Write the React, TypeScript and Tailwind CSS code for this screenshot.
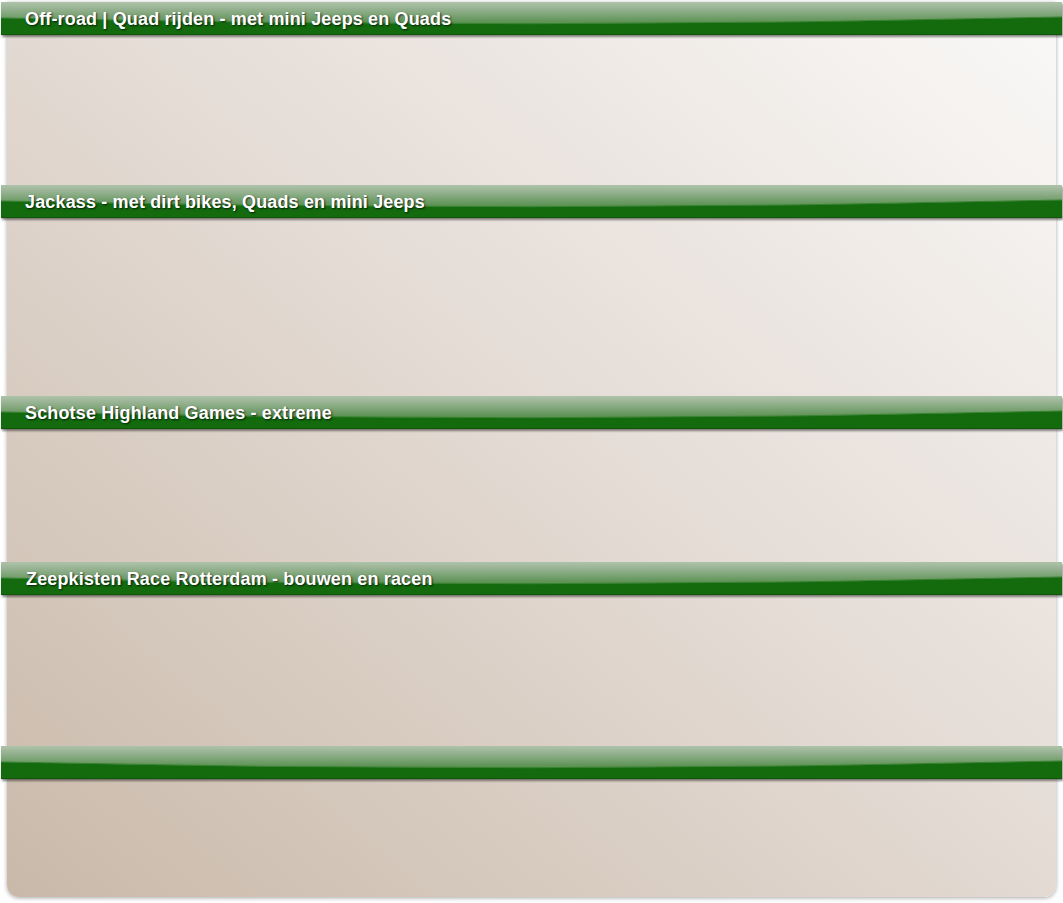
import React from "react";

function Bar({ title, indent = 24 }: { title?: string; indent?: number }) {
  return (
    <div className="relative mx-[-6px] h-[33px] bg-[#136b0e] shadow-[1px_2px_2px_rgba(0,0,0,0.45)]">
      <svg
        className="absolute inset-0 h-full w-full"
        viewBox="0 0 1000 33"
        preserveAspectRatio="none"
      >
        <defs>
          <linearGradient id="gl" x1="0" y1="0" x2="0" y2="1">
            <stop offset="0" stopColor="#aec3aa" />
            <stop offset="0.35" stopColor="#93b08e" />
            <stop offset="1" stopColor="#568f4e" />
          </linearGradient>
        </defs>
        <path d="M0,0 H1000 V15 Q500,28 0,16 Z" fill="url(#gl)" />
        <path d="M0,16 Q500,28 1000,15" fill="none" stroke="#3a8232" strokeWidth="1" vectorEffect="non-scaling-stroke" />
        <rect x="0" y="32" width="1000" height="1" fill="#0f560b" />
      </svg>
      {title && (
        <div
          className={`relative pt-[7px] text-[18px] font-bold leading-[21px] tracking-[0.15px] text-white [text-shadow:1px_1px_2px_rgba(0,0,0,0.75)] ${indent === 25 ? "pl-[25px]" : "pl-[24px]"}`}
          style={{ fontFamily: '"Liberation Sans", Arial, sans-serif' }}
        >
          {title}
        </div>
      )}
    </div>
  );
}

export default function App() {
  return (
    <div className="h-[903px] w-[1063px] bg-white pt-[2px]">
      <div className="mx-[7px] flex h-[895px] flex-col rounded-b-[12px] bg-[linear-gradient(to_top_right,#c9b9a9,#e3dad3_50%,#faf9f8)] shadow-[0_1px_4px_rgba(0,0,0,0.35)]">
        <Bar title="Off-road | Quad rijden - met mini Jeeps en Quads" />
        <div className="h-[150px]" />
        <Bar title="Jackass - met dirt bikes, Quads en mini Jeeps" />
        <div className="h-[178px]" />
        <Bar title="Schotse Highland Games - extreme" />
        <div className="h-[133px]" />
        <Bar title="Zeepkisten Race Rotterdam - bouwen en racen" indent={25} />
        <div className="h-[151px]" />
        <Bar />
      </div>
    </div>
  );
}
